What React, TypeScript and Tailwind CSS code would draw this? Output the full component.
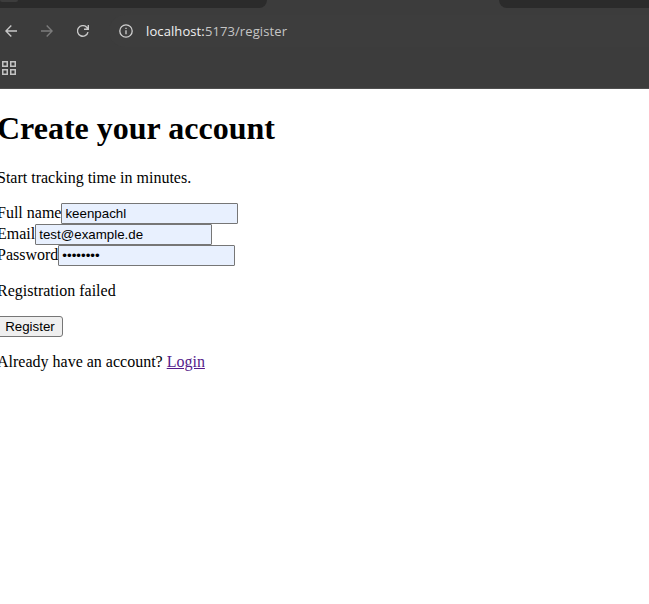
import React from "react";

type FieldProps = {
  label: string;
  type: string;
  value: string;
};

function Field({ label, type, value }: FieldProps) {
  return (
    <label className="flex h-[21px] items-start">
      <span className="whitespace-nowrap pt-px leading-[18px]">{label}</span>
      <input
        type={type}
        defaultValue={value}
        className="h-[21px] w-[177px] rounded-[1px] border border-[#767676] bg-[#e8f0fe] px-[3px] py-0 font-['Liberation_Sans',Arial,sans-serif] text-[13.333px] leading-[15px] text-black outline-none"
      />
    </label>
  );
}

function BrowserBar() {
  return (
    <header className="h-[89px] overflow-hidden border-b border-[#4f4f4f] bg-[#3c3c3c] font-['Open_Sans','Noto_Sans',sans-serif]">
      <div className="flex h-2 justify-between bg-[#3c3c3c]">
        <div className="h-2 w-[267px] rounded-br-[8px] bg-[#2b2b2b]">
          <div className="h-[2px] w-[18px] rounded-b-full bg-[#3c3c3c]" />
        </div>
        <div className="h-2 w-[150px] rounded-bl-[8px] bg-[#2b2b2b]" />
      </div>
      <nav className="flex h-[46px] items-center">
        <svg className="ml-[5px] h-3 w-3 shrink-0" viewBox="0 0 12 12" fill="none" stroke="#c8c8c8" strokeWidth="1.4">
          <path d="M12 6H1.2M6.3.6.9 6l5.4 5.4" />
        </svg>
        <svg className="ml-6 h-3 w-3 shrink-0" viewBox="0 0 12 12" fill="none" stroke="#7c7c7c" strokeWidth="1.4">
          <path d="M0 6h10.8M5.7.6 11.1 6l-5.4 5.4" />
        </svg>
        <svg className="ml-6 h-3 w-3 shrink-0" viewBox="0 0 12 12" fill="none" stroke="#c8c8c8" strokeWidth="1.4">
          <path d="M11 7.1A5.3 5.3 0 1 1 9.7 2.3L11 3.7M11.3 0v4.3H7" />
        </svg>
        <div className="ml-5 flex h-8 flex-1 items-center rounded-l-full bg-[#3d3d3d] pl-[10px]">
          <svg className="h-[14px] w-[14px] shrink-0" viewBox="0 0 14 14" fill="none" stroke="#d0d0d0" strokeWidth="1.3">
            <circle cx="7" cy="7" r="6.2" />
            <path d="M7 6.3v4M7 3.7v1.4" />
          </svg>
          <span className="ml-[13px] whitespace-nowrap text-[13px] leading-5 tracking-[0.1px] text-[#c5c5c5]">
            <span className="text-[#f0f0f0]">localhost:</span>5173/register
          </span>
        </div>
      </nav>
      <div className="flex h-[34px] items-start pl-[2px] pt-[7px]">
        <svg className="h-[14px] w-[14px]" viewBox="0 0 14 14" fill="none" stroke="#c2c2c2" strokeWidth="1.5">
          <path d="M.75.75h4.5v4.5H.75zM8.75.75h4.5v4.5h-4.5zM.75 8.75h4.5v4.5H.75zM8.75 8.75h4.5v4.5h-4.5z" />
        </svg>
      </div>
    </header>
  );
}

export default function App() {
  return (
    <div className="h-[604px] w-full overflow-hidden bg-white">
      <BrowserBar />
      <main className="-ml-[3px] pt-[21px] font-['Liberation_Serif','Times_New_Roman',serif] text-base leading-[18px] text-black">
        <h1 className="text-[32px] font-bold leading-[37px]">Create your account</h1>
        <p className="mt-[22px]">Start tracking time in minutes.</p>
        <form className="mt-4" onSubmit={(event) => event.preventDefault()}>
          <Field label="Full name" type="text" value="keenpachl" />
          <Field label="Email" type="text" value="test@example.de" />
          <Field label="Password" type="password" value="password" />
          <p className="mt-4">Registration failed</p>
          <button
            type="submit"
            className="mt-4 block h-[21px] w-[66px] rounded-[3px] border border-[#767676] bg-[#efefef] text-center font-['Liberation_Sans',Arial,sans-serif] text-[13.333px] leading-[15px]"
          >
            Register
          </button>
        </form>
        <p className="mt-4">
          Already have an account?{" "}
          <a href="#login" className="text-[#551a8b] underline">
            Login
          </a>
        </p>
      </main>
    </div>
  );
}
